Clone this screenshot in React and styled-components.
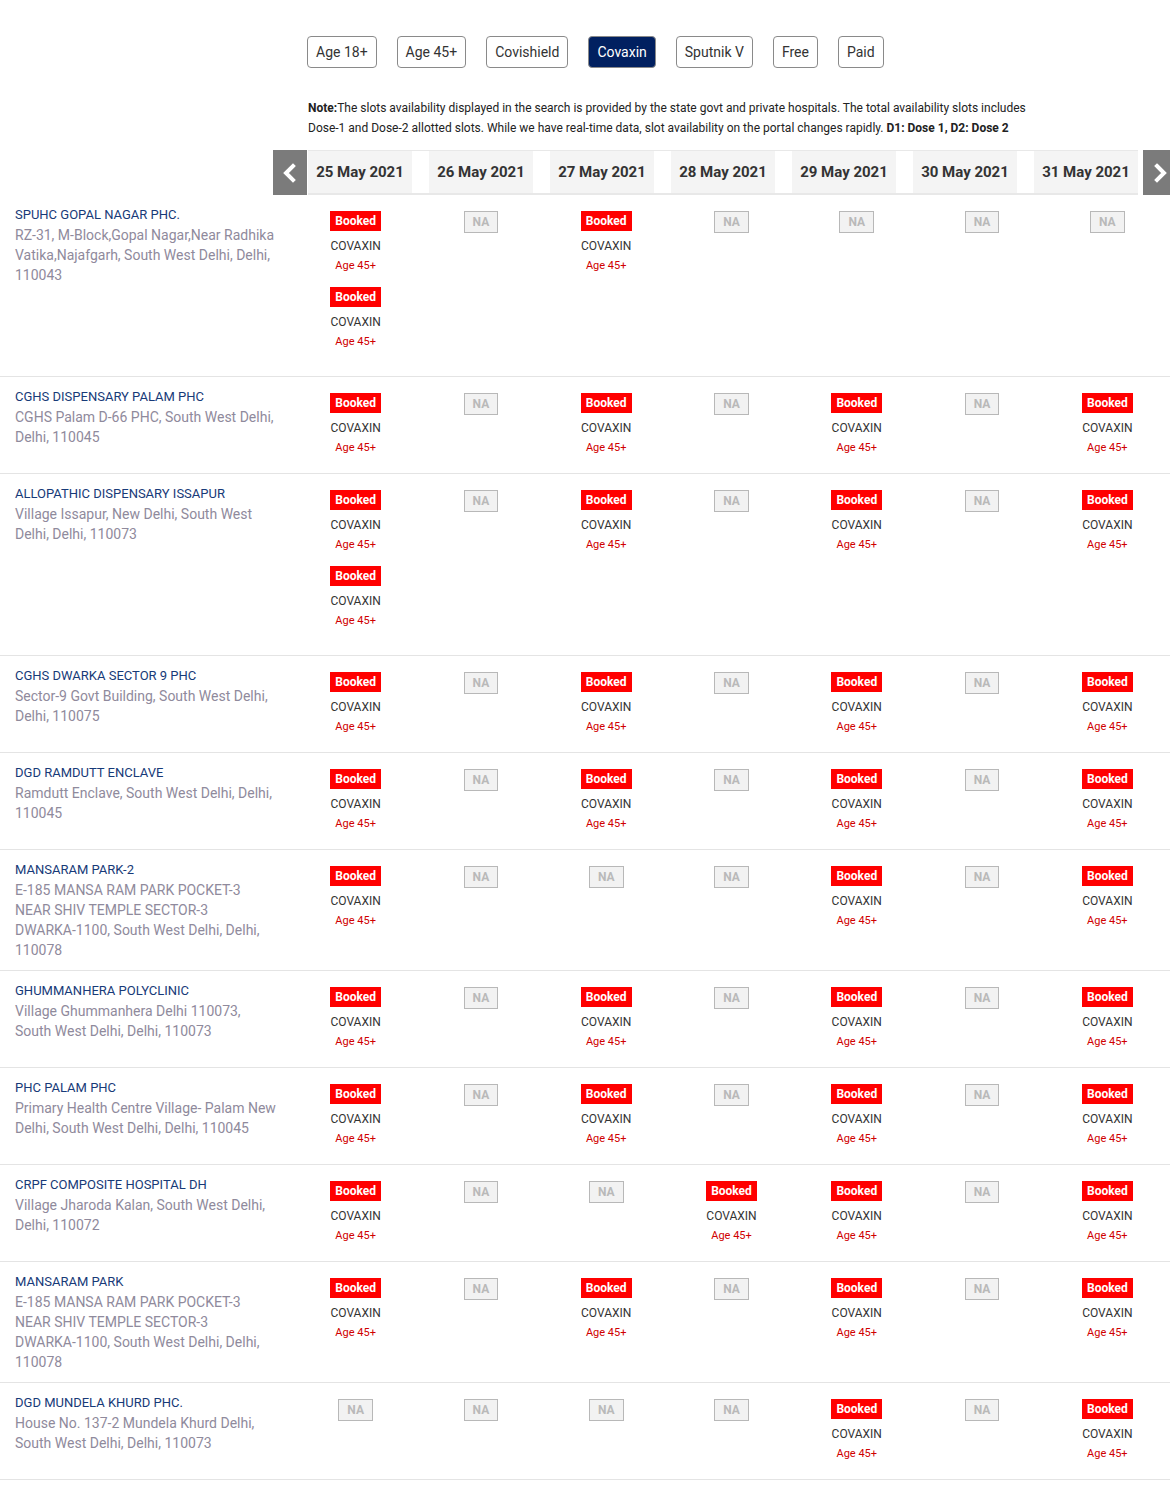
import React from "react";
import styled, { createGlobalStyle } from "styled-components";

const Global = createGlobalStyle`
  html, body { margin: 0; padding: 0; background: #fff; }
  body { font-family: Roboto, "Noto Sans", Arial, sans-serif; overflow-x: hidden; }
  * { box-sizing: border-box; }
`;

const Page = styled.div`
  width: 1170px;
  overflow: hidden;
  padding-top: 36px;
  padding-bottom: 8px;
`;

const Filters = styled.div`
  display: flex;
  gap: 20px;
  padding-left: 307px;
`;

const FilterBtn = styled.button`
  height: 32px;
  padding: 0 8px;
  border: 1px solid #8a8a8a;
  border-radius: 4px;
  background: ${(p) => (p.$active ? "#012060" : "#fff")};
  color: ${(p) => (p.$active ? "#fff" : "#333")};
  font-family: Roboto, Arial, sans-serif;
  font-size: 14px;
  cursor: pointer;
`;

const Note = styled.p`
  margin: 30px 0 0 308px;
  width: 740px;
  font-size: 12px;
  line-height: 20px;
  color: #222;
  b { font-weight: 700; }
`;

const DateStrip = styled.div`
  display: flex;
  margin-top: 12px;
  padding-left: 273px;
  height: 45px;
`;

const Arrow = styled.div`
  flex: 0 0 34px;
  height: 45px;
  background: #7b7b7b;
  display: flex;
  align-items: center;
  justify-content: center;
  margin-left: ${(p) => (p.$right ? "5px" : "0")};
`;

const Tabs = styled.div`
  display: flex;
  gap: 17px;
  margin-left: 1px;
  border-top: 1px solid #e8e8e8;
  border-bottom: 2px solid #e8e8e8;
`;

const Tab = styled.div`
  width: 104px;
  background: #f4f4f4;
  display: flex;
  align-items: center;
  justify-content: center;
  font-size: 15px;
  font-weight: 700;
  color: #333;
`;

const Row = styled.div`
  display: grid;
  grid-template-columns: 293px repeat(7, 1fr);
  border-bottom: 1px solid #e4e4e4;
`;

const Center = styled.div`
  padding: 10px 15px;
`;

const Name = styled.div`
  font-size: 13px;
  line-height: 20px;
  color: #173a78;
  text-transform: uppercase;
`;

const Address = styled.div`
  font-size: 14px;
  line-height: 20px;
  color: #8f8a9c;
`;

const NoWrap = styled.span`
  white-space: nowrap;
`;

const SlotCell = styled.div`
  display: flex;
  flex-direction: column;
  align-items: center;
  gap: 11px;
  padding: 16px 0 ${(p) => (p.$multi ? "24px" : "15px")};
`;

const Slot = styled.div`
  display: flex;
  flex-direction: column;
  align-items: center;
`;

const Badge = styled.span`
  display: inline-block;
  height: ${(p) => (p.$na ? "22px" : "20px")};
  line-height: 20px;
  padding: 0 ${(p) => (p.$na ? "8px" : "5px")};
  font-size: 12px;
  font-weight: 700;
  background: ${(p) => (p.$na ? "#f2f2f2" : "#ff0000")};
  color: ${(p) => (p.$na ? "#b9b9b9" : "#fff")};
  border: ${(p) => (p.$na ? "1px solid #b8b8b8" : "none")};
`;

const Vaccine = styled.div`
  margin-top: 5px;
  font-size: 12px;
  line-height: 20px;
  color: #333;
`;

const Age = styled.div`
  font-size: 11px;
  line-height: 20px;
  color: #d00000;
`;

const Chevron = ({ dir }) => (
  <svg width="16" height="20" viewBox="0 0 16 20">
    <polyline
      points={dir === "left" ? "11,3 4,10 11,17" : "5,3 12,10 5,17"}
      fill="none"
      stroke="#fff"
      strokeWidth="4"
      strokeLinecap="square"
      strokeLinejoin="miter"
    />
  </svg>
);

const filters = ["Age 18+", "Age 45+", "Covishield", "Covaxin", "Sputnik V", "Free", "Paid"];
const dates = ["25", "26", "27", "28", "29", "30", "31"].map((d) => `${d} May 2021`);

const mansa = (
  <>
    E-185 MANSA RAM PARK POCKET-3 NEAR SHIV TEMPLE SECTOR-3 <NoWrap>DWARKA-1100,</NoWrap> South West Delhi,
    Delhi, 110078
  </>
);

const centers = [
  {
    name: "SPUHC GOPAL NAGAR PHC.",
    address: "RZ-31, M-Block,Gopal Nagar,Near Radhika Vatika,Najafgarh, South West Delhi, Delhi, 110043",
    slots: [2, 0, 1, 0, 0, 0, 0],
  },
  {
    name: "CGHS DISPENSARY PALAM PHC",
    address: "CGHS Palam D-66 PHC, South West Delhi, Delhi, 110045",
    slots: [1, 0, 1, 0, 1, 0, 1],
  },
  {
    name: "ALLOPATHIC DISPENSARY ISSAPUR",
    address: "Village Issapur, New Delhi, South West Delhi, Delhi, 110073",
    slots: [2, 0, 1, 0, 1, 0, 1],
  },
  {
    name: "CGHS DWARKA SECTOR 9 PHC",
    address: "Sector-9 Govt Building, South West Delhi, Delhi, 110075",
    slots: [1, 0, 1, 0, 1, 0, 1],
  },
  {
    name: "DGD RAMDUTT ENCLAVE",
    address: "Ramdutt Enclave, South West Delhi, Delhi, 110045",
    slots: [1, 0, 1, 0, 1, 0, 1],
  },
  { name: "MANSARAM PARK-2", address: mansa, slots: [1, 0, 0, 0, 1, 0, 1] },
  {
    name: "GHUMMANHERA POLYCLINIC",
    address: "Village Ghummanhera Delhi 110073, South West Delhi, Delhi, 110073",
    slots: [1, 0, 1, 0, 1, 0, 1],
  },
  {
    name: "PHC PALAM PHC",
    address: "Primary Health Centre Village- Palam New Delhi, South West Delhi, Delhi, 110045",
    slots: [1, 0, 1, 0, 1, 0, 1],
  },
  {
    name: "CRPF COMPOSITE HOSPITAL DH",
    address: "Village Jharoda Kalan, South West Delhi, Delhi, 110072",
    slots: [1, 0, 0, 1, 1, 0, 1],
  },
  { name: "MANSARAM PARK", address: mansa, slots: [1, 0, 1, 0, 1, 0, 1] },
  {
    name: "DGD MUNDELA KHURD PHC.",
    address: "House No. 137-2 Mundela Khurd Delhi, South West Delhi, Delhi, 110073",
    slots: [0, 0, 0, 0, 1, 0, 1],
  },
];

const Cell = ({ count }) => (
  <SlotCell $multi={count > 1}>
    {count === 0 ? (
      <Badge $na>NA</Badge>
    ) : (
      Array.from({ length: count }).map((_, i) => (
        <Slot key={i}>
          <Badge>Booked</Badge>
          <Vaccine>COVAXIN</Vaccine>
          <Age>Age 45+</Age>
        </Slot>
      ))
    )}
  </SlotCell>
);

export default function App() {
  return (
    <Page>
      <Global />
      <Filters>
        {filters.map((f) => (
          <FilterBtn key={f} $active={f === "Covaxin"}>
            {f}
          </FilterBtn>
        ))}
      </Filters>
      <Note>
        <b>Note:</b>The slots availability displayed in the search is provided by the state govt and private
        hospitals. The total availability slots includes Dose-1 and Dose-2 allotted slots. While we have
        real-time data, slot availability on the portal changes rapidly. <b>D1: Dose 1, D2: Dose 2</b>
      </Note>
      <DateStrip>
        <Arrow>
          <Chevron dir="left" />
        </Arrow>
        <Tabs>
          {dates.map((d) => (
            <Tab key={d}>{d}</Tab>
          ))}
        </Tabs>
        <Arrow $right>
          <Chevron dir="right" />
        </Arrow>
      </DateStrip>
      {centers.map((c) => (
        <Row key={c.name}>
          <Center>
            <Name>{c.name}</Name>
            <Address>{c.address}</Address>
          </Center>
          {c.slots.map((n, i) => (
            <Cell key={i} count={n} />
          ))}
        </Row>
      ))}
    </Page>
  );
}
